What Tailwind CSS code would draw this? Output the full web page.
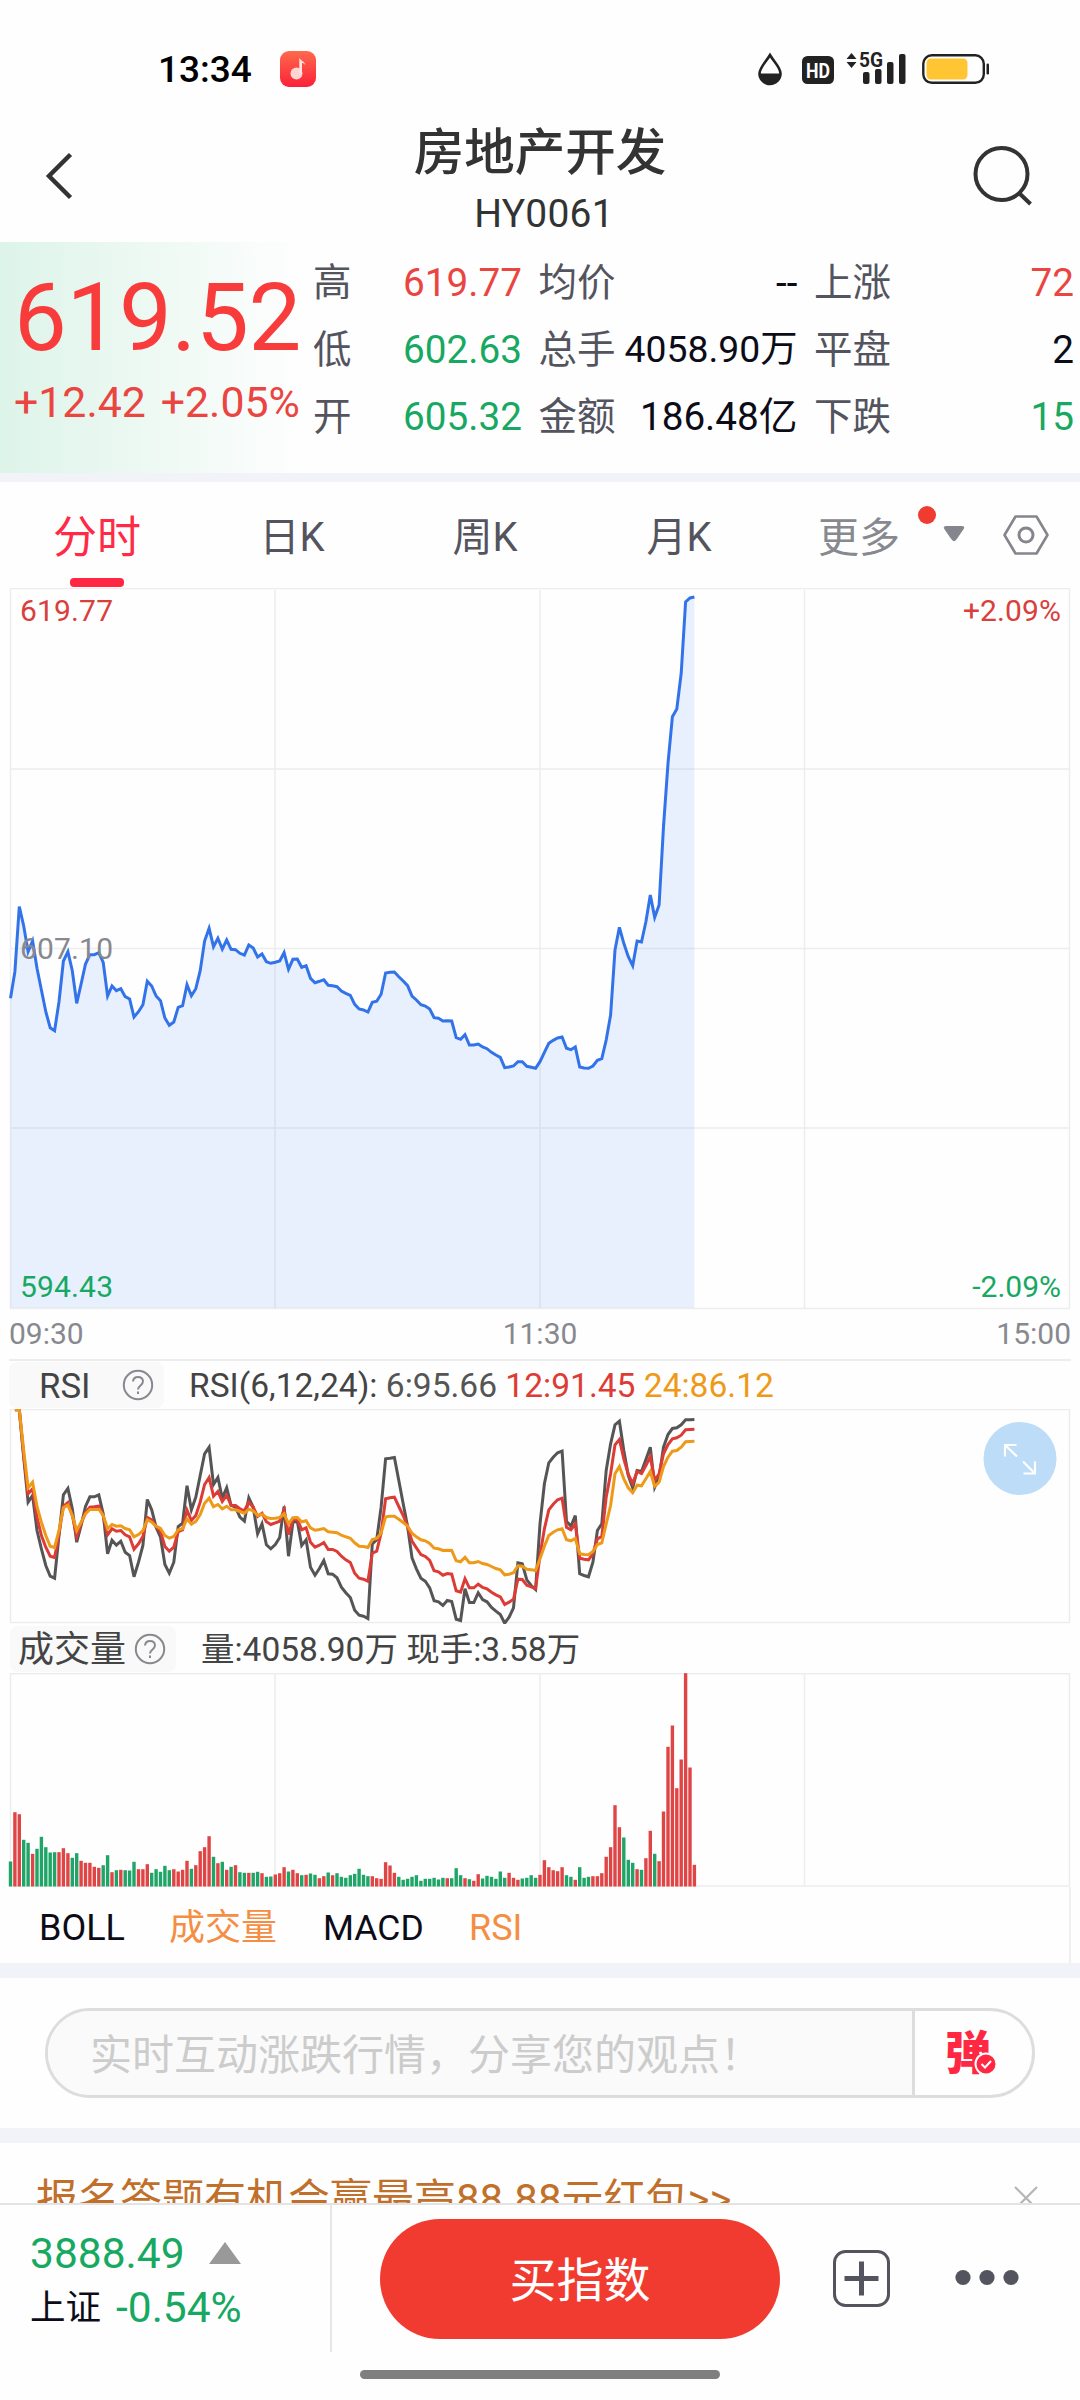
<!DOCTYPE html>
<html lang="zh-CN">
<head>
<meta charset="utf-8">
<title>房地产开发 HY0061</title>
<script src="https://cdn.jsdelivr.net/npm/@tailwindcss/browser@4"></script>
</head>
<body class="bg-white">
<div class="flex h-[2400px] w-[1080px] flex-col overflow-hidden bg-[#fefefe] font-['Roboto','Noto_Sans_CJK_SC',sans-serif] text-[#0c0c18]">

  <!-- Status bar -->
  <div class="flex h-[90px] shrink-0 items-start pl-[158px] pr-[88px] pt-[49px]">
    <span class="w-[122px] text-[37px] font-medium leading-[42px] text-black">13:34</span>
    <svg class="mt-[2px]" width="36" height="36" viewBox="0 0 36 36">
      <defs><linearGradient id="m" x1="0" y1="0" x2="0" y2="1"><stop offset="0" stop-color="#ff6a4d"/><stop offset="1" stop-color="#fb2038"/></linearGradient></defs>
      <rect width="36" height="36" rx="9" fill="url(#m)"/>
      <circle cx="16.500" cy="22.500" r="6" fill="#ffd5d2"/><path d="M19.300 22V7c1.200 2.500 5 3 6 7-1.500-1.800-2.500-2-3.300-2v11z" fill="#ffe3e0"/>
    </svg>
    <svg class="ml-auto mt-[-4px]" width="234" height="46" viewBox="758 45 234 46">
      <path d="M770 55c4 7 10.500 12.500 10.500 18.500a10.500 10.500 0 0 1-21 0C759.500 67.500 766 62 770 55z" fill="none" stroke="#222" stroke-width="2.600"/>
      <path d="M759.500 73.500h21a10.500 10.500 0 0 1-21 0z" fill="#222"/>
      <rect x="802" y="56" width="32" height="28" rx="5.500" fill="#222"/>
      <text x="818" y="77.500" text-anchor="middle" font-size="21" font-weight="700" fill="#fff" textLength="24" lengthAdjust="spacingAndGlyphs">HD</text>
      <path d="M846.500 59l5-6 5 6zM846.500 62h10l-5 6z" fill="#222"/>
      <text x="859" y="67" font-size="20" font-weight="700" fill="#222" textLength="24" lengthAdjust="spacingAndGlyphs">5G</text>
      <g fill="#222"><rect x="863" y="72" width="6.500" height="12" rx="2"/><rect x="875" y="69" width="6.500" height="15" rx="2"/><rect x="887" y="62" width="6.500" height="22" rx="2"/><rect x="899" y="54" width="6.500" height="30" rx="2"/></g>
      <rect x="923.300" y="55.300" width="60.500" height="27.500" rx="8.500" fill="none" stroke="#222" stroke-width="2.400"/>
      <rect x="926.500" y="58.500" width="41" height="21" rx="4.500" fill="#ffc533"/>
      <rect x="986.500" y="63.500" width="2.500" height="11" rx="1.200" fill="#222"/>
    </svg>
  </div>

  <!-- Title -->
  <header class="grid h-[152px] shrink-0 grid-cols-[200px_1fr_200px] items-start pl-[44px] pr-[44px]">
    <svg class="mt-[60px]" width="32" height="52" viewBox="44 150 32 52"><path d="M70.500 154.500 49 176l21.500 21.500" fill="none" stroke="#333" stroke-width="4.500"/></svg>
    <div class="flex flex-col items-center text-[#333]">
      <h1 class="mt-[31px] text-[50.500px] font-medium leading-[64px]">房地产开发</h1>
      <div class="mt-[5px] pl-[8px] text-[39px] leading-[48px] tracking-[0.200px]">HY0061</div>
    </div>
    <svg class="ml-auto mt-[53px]" width="64" height="64" viewBox="974 143 64 64"><circle cx="1003.500" cy="174" r="26" fill="none" stroke="#333" stroke-width="4"/><path d="M1020.500 192.500l12 11.500" stroke="#333" stroke-width="4"/></svg>
  </header>

  <!-- Quote -->
  <section class="flex h-[231px] shrink-0">
    <div class="w-[306px] bg-linear-to-r from-[#ddf4e9] to-[#fefefe] pl-[14px] text-[#f83c3c]">
      <div class="mt-[21px] text-[94px] leading-[110px] tracking-[-0.300px]">619.52</div>
      <div class="mt-[4px] flex gap-[15px] whitespace-nowrap text-[42.800px] leading-[50px] text-[#ea4541]"><span>+12.42</span><span>+2.05%</span></div>
    </div>
    <div class="flex h-[212px] flex-1 justify-between pl-[7px] pr-[6px] pt-[7px] text-[38.700px] leading-[67px] [&_i]:text-[38.500px] [&_i]:not-italic [&_i]:text-[#54545e] [&_p]:flex [&_p]:h-[67px] [&_p]:justify-between">
      <div class="w-[209px]">
        <p><i>高</i><b class="font-normal text-[#ea4541]">619.77</b></p>
        <p><i>低</i><b class="font-normal text-[#17a862]">602.63</b></p>
        <p><i>开</i><b class="font-normal text-[#17a862]">605.32</b></p>
      </div>
      <div class="w-[259px] whitespace-nowrap">
        <p><i>均价</i><span>--</span></p>
        <p><i>总手</i><span class="text-[37.300px]">4058.90万</span></p>
        <p><i>金额</i><span>186.48亿</span></p>
      </div>
      <div class="w-[260px]">
        <p><i>上涨</i><b class="font-normal text-[#ea4541]">72</b></p>
        <p><i>平盘</i><span>2</span></p>
        <p><i>下跌</i><b class="font-normal text-[#17a862]">15</b></p>
      </div>
    </div>
  </section>
  <div class="h-[9px] shrink-0 bg-[#f2f3f9]"></div>

  <!-- Period tabs -->
  <nav class="flex h-[106px] shrink-0 text-[40px] leading-[60px] text-[#54545e]">
    <div class="flex w-[194px] flex-col items-center pt-[26px] text-[44px] text-[#ff2a45]"><span>分时</span><span class="mt-[10px] h-[9px] w-[54px] rounded-[4px] bg-[#ff2742]"></span></div>
    <div class="w-[196px] pt-[26px] text-center">日K</div>
    <div class="w-[190px] pt-[26px] text-center">周K</div>
    <div class="w-[198px] pt-[26px] text-center">月K</div>
    <div class="flex flex-1 pl-[40px] pt-[26px] text-[#88888f]">
      <span class="w-[99px] text-[41px]">更多</span>
      <svg class="mt-[-4px]" width="134" height="60" viewBox="917 504 134 60">
        <circle cx="927" cy="515" r="9" fill="#ef3b30"/>
        <path d="M945.500 526.500h17q2 0 1 2l-7.500 11q-2 2.500-4 0l-7.500-11q-1-2 1-2z" fill="#85858d" stroke="#85858d"/>
        <path d="M1015.500 516.500h21l11 18.500-11 18.500h-21l-11-18.500z" fill="none" stroke="#85858d" stroke-width="2.600" stroke-linejoin="round"/>
        <circle cx="1026" cy="535" r="7" fill="none" stroke="#85858d" stroke-width="3"/>
      </svg>
    </div>
  </nav>

  <!-- Intraday chart -->
  <svg id="price" class="block shrink-0" width="1080" height="722" viewBox="0 0 1080 722" font-size="30">
    <path d="M10 .5h1060M10 181h1060M10 360.500h1060M10 540h1060M10 720.500h1060M10.500 0v721M275 2v718M540 2v718M804.500 2v718M1069.500 0v721" stroke="#ededed" stroke-width="1.500" fill="none"/>
    <g data-plot></g>
    <text x="20" y="33" fill="#d9403b" textLength="93">619.77</text>
    <text x="1061" y="33" text-anchor="end" fill="#d9403b" textLength="98">+2.09%</text>
    <text x="20" y="371" fill="#88888f" textLength="93">607.10</text>
    <text x="20" y="709" fill="#17a862" textLength="93">594.43</text>
    <text x="1061" y="709" text-anchor="end" fill="#17a862">-2.09%</text>
  </svg>
  <div class="flex h-[49px] shrink-0 items-start justify-between px-[9px] pt-[6px] text-[30px] leading-[36px] text-[#88888f]"><span>09:30</span><span>11:30</span><span>15:00</span></div>

  <!-- RSI -->
  <div class="mx-[9px] flex h-[50px] shrink-0 items-center border-t-2 border-[#ededed] text-[33.550px] text-[#444]">
    <div class="flex h-[46px] w-[155px] items-center justify-between rounded-lg bg-[#f9f9f9] pl-[30px] pr-[10px]"><span class="pt-[2px] text-[34.800px]">RSI</span>
      <svg width="32" height="32" viewBox="0 0 32 32" fill="none" stroke="#88888f" stroke-width="2"><circle cx="16" cy="16" r="14.200"/><path d="M11 12.500q.5-4.500 5-4.500t5 4q0 2.500-2.500 4.500T16 20.500M16 22.500v2.500"/></svg></div>
    <div class="ml-[25px] whitespace-pre pt-[2px]"><span>RSI(6,12,24): </span><span class="text-[#555]">6:95.66 </span><span class="text-[#dd3b35]">12:91.45 </span><span class="text-[#ee9a18]">24:86.12</span></div>
  </div>
  <svg id="rsi" class="block shrink-0" width="1080" height="215" viewBox="0 0 1080 215">
    <rect x="10.500" y=".5" width="1059" height="213" fill="none" stroke="#ededed" stroke-width="1.500"/>
    <g data-plot></g>
    <circle cx="1020" cy="49.500" r="36.500" fill="#bddcf8"/>
    <path d="M1005 47.500V36h11.500M1005.500 36.500l11.500 11M1035 52.500v12h-11.500M1034.500 64 1023 52.500" fill="none" stroke="#fff" stroke-width="2.200"/>
  </svg>

  <!-- Volume -->
  <div class="mx-[10px] flex h-[49px] shrink-0 items-center text-[33.500px] text-[#444]">
    <div class="flex h-[46px] w-[166px] items-center justify-between rounded-lg bg-[#f9f9f9] pl-[8px] pr-[10px]"><span class="pt-[2px] text-[36px] leading-[44px]">成交量</span>
      <svg width="32" height="32" viewBox="0 0 32 32" fill="none" stroke="#88888f" stroke-width="2"><circle cx="16" cy="16" r="14.200"/><path d="M11 12.500q.5-4.500 5-4.500t5 4q0 2.500-2.500 4.500T16 20.500M16 22.500v2.500"/></svg></div>
    <div class="ml-[25px] pt-[2px] leading-[44px]">量:4058.90万 现手:3.58万</div>
  </div>
  <svg id="vol" class="block shrink-0" width="1080" height="214" viewBox="0 0 1080 214">
    <path d="M10 .7h1060M10 213h1060M10.500 0v213M275 0v213M540 0v213M804.500 0v213M1069.500 0v213" stroke="#ededed" stroke-width="1.500" fill="none"/>
    <g data-plot></g>
  </svg>

  <!-- Indicators -->
  <div class="mr-[9px] flex h-[76px] shrink-0 items-center border-r-2 border-[#f0f0f0] pl-[39px] pt-[6px] text-[36px] leading-[70px]">
    <span class="w-[130px]">BOLL</span><span class="w-[154px] text-[#f58d42]">成交量</span><span class="w-[146px] text-[35.500px]">MACD</span><span class="text-[#f58d42]">RSI</span>
  </div>
  <div class="h-[15px] shrink-0 bg-[#f2f3f9]"></div>

  <!-- Comment box -->
  <section class="flex h-[150px] shrink-0 px-[45px] pt-[30px]">
    <div class="flex h-[90px] flex-1 overflow-hidden rounded-full border-[3px] border-[#ddd]">
      <div class="flex-1 whitespace-nowrap border-r-[3px] border-[#ddd] bg-[#fafafa] pl-[42px] text-[42px] leading-[90px] text-[#ccc]">实时互动涨跌行情，分享您的观点！</div>
      <div class="relative w-[117px] pl-[30px] text-[46px] font-black leading-[84px] text-[#ff2742]">弹
        <svg class="absolute left-[59px] top-[41px]" width="24" height="24" viewBox="0 0 24 24"><circle cx="12" cy="12" r="10.500" fill="#ff2742" stroke="#fff" stroke-width="2"/><path d="M7.500 12l3.500 3.500 6-6.500" fill="none" stroke="#fff" stroke-width="2"/></svg>
      </div>
    </div>
  </section>
  <div class="h-[15px] shrink-0 bg-[#f2f3f9]"></div>

  <!-- Promotion, scrolled under the bottom bar -->
  <div class="flex h-[60px] shrink-0 items-start justify-between overflow-hidden pl-[36px] pr-[42px]">
    <span class="mt-[27px] whitespace-nowrap text-[42px] leading-[60px] text-[#c0702a]">报名答题有机会赢最高88.88元红包&gt;&gt;</span>
    <svg class="mt-[43px]" width="24" height="24" viewBox="0 0 24 24"><path d="M1 1l22 22M23 1L1 23" stroke="#b5b5b5" stroke-width="2.200"/></svg>
  </div>

  <!-- Bottom bar -->
  <footer class="flex h-[197px] shrink-0 flex-col items-center border-t-2 border-[#e3e3e3] bg-[#fefefe]">
    <div class="flex h-[147px] w-full">
      <div class="w-[332px] border-r-2 border-[#e6e6e6] pl-[30px] text-[42.500px] text-[#17a862]">
        <div class="mt-[24px] flex items-center leading-[50px]">3888.49<svg class="ml-[24px] mt-[-3px]" width="32" height="22" viewBox="0 0 32 22"><path d="M16 0l16 22H0z" fill="#999"/></svg></div>
        <div class="mt-[4px] flex leading-[50px]"><span class="w-[86px] text-[35.500px] text-[#0c0c18]">上证</span>-0.54%</div>
      </div>
      <div class="ml-[48px] mt-[14px] h-[120px] w-[400px] rounded-full bg-[#f13b30] text-center text-[47px] leading-[124px] text-white">买指数</div>
      <svg class="ml-[53px] mt-[45px]" width="58" height="58" viewBox="0 0 58 58" fill="none" stroke="#54545e"><rect x="1.500" y="1.500" width="54" height="54" rx="11" stroke-width="3"/><path d="M28.500 11.500v34M11.500 28.500h34" stroke-width="5"/></svg>
      <svg class="ml-[64px] mt-[64px]" width="64" height="18" viewBox="0 0 64 18" fill="#54545e"><circle cx="8" cy="8.500" r="7.600"/><circle cx="32" cy="8.500" r="7.600"/><circle cx="56" cy="8.500" r="7.600"/></svg>
    </div>
    <div class="mt-[18px] h-[9px] w-[360px] rounded-full bg-[#7f7f7f]"></div>
  </footer>
</div>

<script>
// One sample per minute; session of 241 samples spans x = 10.5 … 1069.5. Values are thirds of a pixel.
const X = i => (10.5 + i * 4.4125).toFixed(1);
const price = [355,275,80,138,215,183,265,330,395,443,452,365,243,215,272,370,312,252,224,224,218,247,348,318,332,326,350,357,411,395,374,304,318,348,362,414,436,426,382,377,314,347,326,272,183,145,200,175,207,180,208,209,220,225,195,204,231,222,245,250,247,243,218,268,238,237,262,257,295,308,304,299,316,317,320,333,340,346,373,387,390,396,367,364,343,279,277,276,290,303,317,348,360,374,378,387,413,415,423,422,423,473,478,464,495,495,492,501,506,517,525,532,563,561,558,545,545,559,562,565,545,517,490,481,474,471,505,509,501,561,564,565,558,541,536,480,405,210,142,190,230,257,183,186,125,45,112,75,-160,-350,-490,-513,-620,-834,-846,-849];
const rsi6 = [28,28,170,305,285,390,445,495,527,533,405,283,264,325,425,375,318,289,289,283,340,460,419,434,422,455,465,529,485,435,297,328,380,410,492,518,485,378,368,256,328,290,225,160,140,252,231,293,262,315,320,350,362,292,320,400,370,433,445,432,411,318,467,365,362,435,418,500,524,504,480,520,521,532,560,577,591,629,644,647,654,430,418,320,175,173,171,240,310,378,472,505,533,542,562,601,604,615,600,603,656,660,565,606,606,577,597,604,621,632,642,668,650,622,487,490,538,555,567,370,250,187,170,157,152,362,377,345,520,525,529,485,390,370,210,130,73,62,150,225,262,210,213,177,140,260,230,140,102,84,82,73,58,58,57];
const rsi12 = [28,28,165,280,265,350,405,440,467,471,400,317,306,345,408,370,335,320,319,317,345,403,385,392,390,403,409,446,430,408,351,358,378,393,438,452,440,393,388,329,360,345,305,252,231,287,273,303,284,314,315,325,331,305,320,348,338,364,372,367,362,328,402,357,356,388,382,425,440,434,426,447,447,453,467,478,486,518,533,536,542,458,452,398,295,292,290,318,345,378,422,442,462,468,480,511,514,524,519,521,571,575,535,562,562,551,561,565,575,583,589,612,605,596,536,537,554,559,564,465,385,328,311,298,293,380,388,370,473,476,478,460,415,408,290,220,133,117,175,222,249,213,219,195,168,240,220,160,132,115,112,104,88,87,86];
const rsi24 = [28,28,150,262,245,318,365,405,437,441,390,322,314,345,390,365,340,327,327,326,345,385,372,377,376,384,388,409,402,390,358,365,377,384,405,413,408,388,385,355,371,363,342,308,293,319,312,325,317,328,328,333,338,326,331,345,341,351,354,353,351,340,370,352,351,364,361,382,389,387,384,394,395,397,404,409,413,427,437,438,441,417,414,398,349,347,347,356,366,377,398,409,418,421,429,443,445,450,449,450,481,484,470,487,487,483,489,492,498,504,508,523,521,517,496,497,506,508,510,475,437,405,395,388,385,418,421,414,460,462,463,453,432,427,370,315,220,198,235,262,277,254,256,235,213,257,245,198,170,152,150,140,124,123,122];
const vol = '725g 577r 583r 660g 669g 702r 687g 651g 682g 698g 697g 697r 685r 700r 714g 700g 723r 729r 729r 741r 744r 736g 706g 757r 751g 750r 751g 752g 726g 748r 748r 733r 759g 748g 756g 738g 751g 748r 755r 750r 723r 747g 736r 694r 682r 649r 711g 730r 726g 750r 741g 736r 757g 759g 759r 759g 756g 760r 771g 770g 764r 760r 742r 755g 750r 760r 766g 765r 761g 765g 775r 769r 758g 766r 760g 771g 774g 766g 762g 747g 765g 769g 769r 775r 777r 727r 737r 759r 771g 780g 777g 771g 766g 783g 777g 777g 774g 779g 774g 775r 775g 745g 766g 775r 778g 783r 763r 776g 768g 771g 777g 755g 774g 759r 774r 780r 776g 774g 766g 774g 765r 721r 742r 751r 754r 742r 766g 771g 780r 742g 774g 771g 769r 769r 760r 711r 682r 556r 622r 653g 720g 729g 748r 750g 715r 633r 702g 724r 575r 381r 317r 505r 419r 160r 443r 735r'.split(' ');
const plot = id => document.querySelector('#' + id + ' [data-plot]');
const pts = (a, y0, from) => a.map((v, k) => X(k + from) + ',' + (y0 + v / 3).toFixed(1)).join(' ');
const line = (p, c) => `<polyline points="${p}" fill="none" stroke="${c}" stroke-width="3"/>`;
const pp = pts(price, 292, 0);
plot('price').innerHTML = `<polygon points="10.5,720 ${pp} 694.4,720" fill="#2f7cff" fill-opacity=".105"/>` + line(pp, '#3273ea');
plot('rsi').innerHTML = line(pts(rsi6, -8.5, 1), '#555') + line(pts(rsi12, -8.5, 1), '#dd3b35') + line(pts(rsi24, -8.5, 1), '#ee9a18');
plot('vol').innerHTML = vol.map((s, i) => {
  const h = (800 - parseInt(s)) / 3;
  return `<rect x="${(+X(i) - 1.7).toFixed(1)}" y="${(213.5 - h).toFixed(1)}" width="3.4" height="${h.toFixed(1)}" fill="${s.endsWith('r') ? '#e04545' : '#1fa567'}"/>`;
}).join('');
</script>
</body>
</html>
